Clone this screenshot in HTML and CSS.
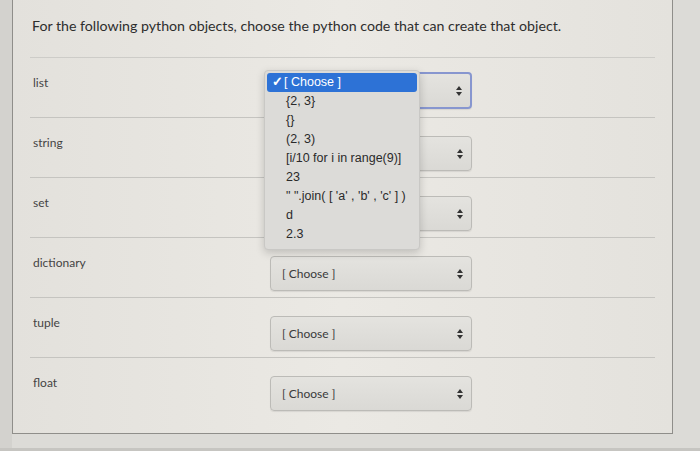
FILE: index.html
```html
<!DOCTYPE html>
<html lang="en">
<head>
    <meta charset="UTF-8">
    <meta name="viewport" content="width=device-width, initial-scale=1.0">
    <title>Python Objects Quiz</title>
    <link rel="stylesheet" href="styles.css">
</head>
<body>
    <div id="page">
        <div id="panel">
            <div class="question">For the following python objects, choose the python code that can create that object.</div>
            <div class="row">
                <div class="label">list</div>
                <div class="pick">
                    <div class="select focused">
                        <span class="choice"></span>
                        <svg class="arrows" width="6" height="10" viewBox="0 0 6 10"><path d="M3 0L6 4H0Z M3 10L0 6H6Z" fill="#333"/></svg>
                    </div>
                    <!-- open dropdown, covers the next two selects -->
                    <div class="menu">
                        <div class="item active"><span class="check">✓</span>[ Choose ]</div>
                        <div class="item">{2, 3}</div>
                        <div class="item">{}</div>
                        <div class="item">(2, 3)</div>
                        <div class="item">[i/10 for i in range(9)]</div>
                        <div class="item">23</div>
                        <div class="item">" ".join( [ 'a' , 'b' , 'c' ] )</div>
                        <div class="item">d</div>
                        <div class="item">2.3</div>
                    </div>
                </div>
            </div>
            <div class="row">
                <div class="label">string</div>
                <div class="pick">
                    <div class="select">
                        <span class="choice"></span>
                        <svg class="arrows" width="6" height="10" viewBox="0 0 6 10"><path d="M3 0L6 4H0Z M3 10L0 6H6Z" fill="#333"/></svg>
                    </div>
                </div>
            </div>
            <div class="row">
                <div class="label">set</div>
                <div class="pick">
                    <div class="select">
                        <span class="choice"></span>
                        <svg class="arrows" width="6" height="10" viewBox="0 0 6 10"><path d="M3 0L6 4H0Z M3 10L0 6H6Z" fill="#333"/></svg>
                    </div>
                </div>
            </div>
            <div class="row">
                <div class="label">dictionary</div>
                <div class="pick">
                    <div class="select">
                        <span class="choice">[ Choose ]</span>
                        <svg class="arrows" width="6" height="10" viewBox="0 0 6 10"><path d="M3 0L6 4H0Z M3 10L0 6H6Z" fill="#333"/></svg>
                    </div>
                </div>
            </div>
            <div class="row">
                <div class="label">tuple</div>
                <div class="pick">
                    <div class="select">
                        <span class="choice">[ Choose ]</span>
                        <svg class="arrows" width="6" height="10" viewBox="0 0 6 10"><path d="M3 0L6 4H0Z M3 10L0 6H6Z" fill="#333"/></svg>
                    </div>
                </div>
            </div>
            <div class="row last">
                <div class="label">float</div>
                <div class="pick">
                    <div class="select">
                        <span class="choice">[ Choose ]</span>
                        <svg class="arrows" width="6" height="10" viewBox="0 0 6 10"><path d="M3 0L6 4H0Z M3 10L0 6H6Z" fill="#333"/></svg>
                    </div>
                </div>
            </div>
        </div>
    </div>
</body>
</html>
```

FILE: styles.css
```css
body {
    margin: 0;
    background-color: #d4d3cf;
    font-family: Lato, "Liberation Sans", sans-serif;
}
#page {
    height: 451px;
    background: linear-gradient(to right, #d3d2ce 0, #d3d2ce 12px, #dcdbd7 12px);
    border-bottom: 3px solid #c6c5c1;
    box-sizing: border-box;
}
#panel {
    margin-left: 12px;
    width: 661px;
    height: 434px;
    box-sizing: border-box;
    background: linear-gradient(to right, #e3e1dc, #ebe9e4 50%, #e4e2dd);
    border-left: 1px solid #8f8e8a;
    border-right: 1px solid #8f8e8a;
    border-bottom: 1px solid #8f8e8a;
}
.question {
    margin: 0 17px;
    padding: 17px 0 0 2px;
    height: 40px;
    font-size: 14.2px;
    color: #2e2e2e;
    border-bottom: 1px solid #cdccc8;
}
.row {
    display: flex;
    margin: 0 17px;
    height: 60px;
    box-sizing: border-box;
    border-bottom: 1px solid #c5c4c0;
}
.row.last {
    border-bottom: none;
}
.label {
    width: 240px;
    padding: 17px 0 0 3px;
    box-sizing: border-box;
    font-size: 12px;
    color: #444444;
}
.pick {
    position: relative;
    padding-top: 18px;
}
.select {
    display: flex;
    align-items: center;
    justify-content: space-between;
    width: 202px;
    height: 35px;
    box-sizing: border-box;
    padding: 0 8px 0 11px;
    border: 1px solid #bcbbb7;
    border-radius: 4px;
    background: linear-gradient(#e4e3df, #dad9d5);
    box-shadow: 0 1px 1px rgba(0, 0, 0, 0.08);
}
.select.focused {
    border: 2px solid #8796cf;
    height: 37px;
    margin-top: -4px;
}
.choice {
    font-size: 12px;
    color: #3a3a3a;
}
.menu {
    position: absolute;
    z-index: 10;
    left: -6px;
    top: 12px;
    width: 156px;
    padding: 2px 2px 5px;
    box-sizing: border-box;
    background-color: #dcdbd8;
    border: 1px solid #c9c8c5;
    border-radius: 4px;
    box-shadow: 0 3px 8px rgba(0, 0, 0, 0.18);
    font-family: "Liberation Sans", Arial, sans-serif;
    font-size: 12.5px;
    color: #2a2a2a;
}
.item {
    height: 19px;
    line-height: 19px;
    padding-left: 19px;
    white-space: nowrap;
}
.item.active {
    position: relative;
    background-color: #2d72d6;
    color: #ffffff;
    border-radius: 3px;
    padding-left: 17px;
}
.check {
    position: absolute;
    left: 5px;
    font-weight: bold;
}
```
